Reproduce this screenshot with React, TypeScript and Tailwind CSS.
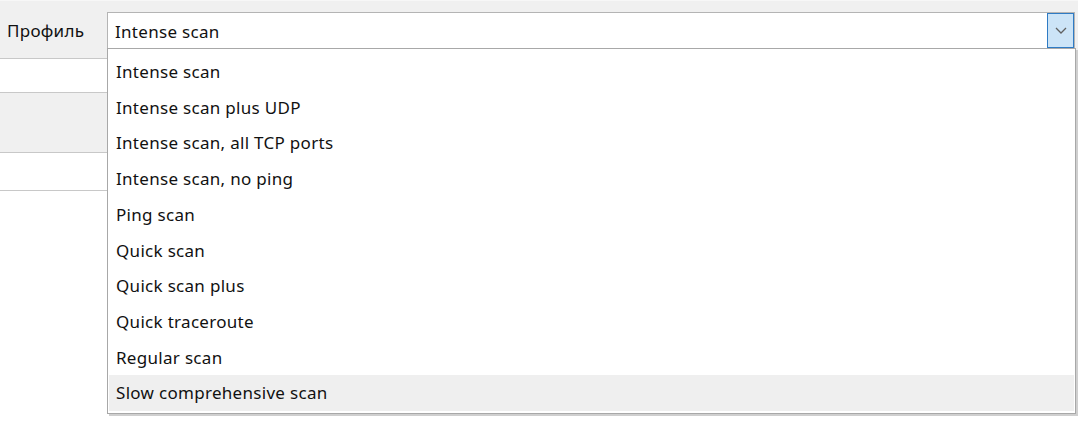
import React from "react";

const items = [
  "Intense scan",
  "Intense scan plus UDP",
  "Intense scan, all TCP ports",
  "Intense scan, no ping",
  "Ping scan",
  "Quick scan",
  "Quick scan plus",
  "Quick traceroute",
  "Regular scan",
  "Slow comprehensive scan",
];

export default function App() {
  return (
    <div
      className="relative w-[1078px] h-[423px] overflow-hidden bg-white text-[17px] tracking-[0.3px] text-[#111]"
      style={{ fontFamily: '"Segoe UI", "Noto Sans", sans-serif' }}
    >
      {/* top bar */}
      <div className="h-[59px] bg-[#f0f0f0] border-t border-[#f7f7f7] border-b border-b-[#c8c8c8] flex items-start">
        <div className="w-[107px] h-[58px] flex items-center pl-[7px] pt-[2px]">Профиль</div>
        <div className="mt-[11px] flex-1 mr-[3px] h-[37px] bg-white border border-[#b4b4b4] flex items-center">
          <span className="pl-[7px] flex-1 pt-[2px]">Intense scan</span>
          <div className="w-[27px] h-[35px] bg-[#cce4f7] border border-[#2f7bc4] flex items-center justify-center">
            <svg width="12" height="7" viewBox="0 0 12 7">
              <path d="M1 1 L6 6 L11 1" fill="none" stroke="#606060" strokeWidth="1.3" />
            </svg>
          </div>
        </div>
      </div>
      {/* left rows */}
      <div className="w-[107px]">
        <div className="h-[34px] bg-white border-b border-[#c8c8c8]" />
        <div className="h-[60px] bg-[#f0f0f0] border-b border-[#c8c8c8]" />
        <div className="h-[38px] bg-white border-b border-[#c8c8c8]" />
        <div className="h-[232px] bg-white" />
      </div>

      {/* dropdown list */}
      <div className="absolute left-[107px] top-[48px] w-[969px] h-[366px] bg-white border border-[#a8a8a8] shadow-[2px_2px_0_#cfcfcf] pt-[5px] px-[1px]">
        {items.map((t, i) => (
          <div
            key={t}
            className={
              "h-[35.7px] flex items-center pl-[7px] " +
              (i === items.length - 1 ? "bg-[#efefef]" : "")
            }
          >
            {t}
          </div>
        ))}
      </div>
    </div>
  );
}
